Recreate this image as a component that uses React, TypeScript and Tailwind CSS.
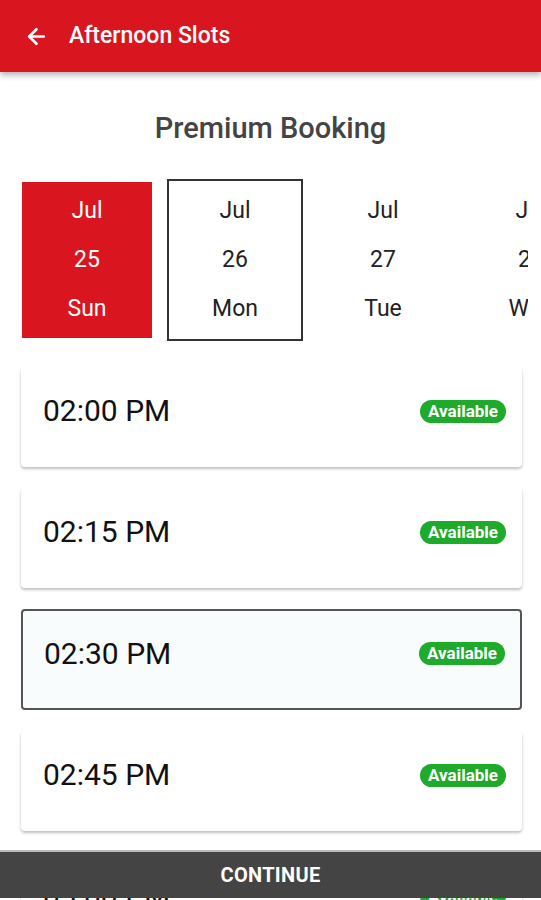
import { ArrowLeft } from "lucide-react";

const dates = [
  { month: "Jul", day: "25", week: "Sun" },
  { month: "Jul", day: "26", week: "Mon" },
  { month: "Jul", day: "27", week: "Tue" },
  { month: "Jul", day: "28", week: "Wed" },
];

const slots = ["02:00 PM", "02:15 PM", "02:30 PM", "02:45 PM", "03:00 PM"];

export default function App() {
  const activeDate = 0;
  const focusDate = 1;
  const selectedSlot = 2;

  return (
    <div
      className="relative h-[900px] overflow-hidden bg-white"
      style={{ fontFamily: "Roboto, 'Noto Sans', sans-serif" }}
    >
      {/* Toolbar */}
      <header className="relative z-10 flex h-[72px] items-center bg-[#d9161f] pl-[24px] text-white shadow-[0_3px_6px_rgba(0,0,0,0.3)]">
        <ArrowLeft size={25} strokeWidth={2.5} />
        <h1 className="ml-[20px] text-[23px] font-medium">Afternoon Slots</h1>
      </header>

      <h2 className="mt-[39px] text-center text-[29px] font-medium leading-[34px] text-[#444]">
        Premium Booking
      </h2>

      {/* Date strip */}
      <div className="mx-[13px] mt-[34px] flex h-[162px] overflow-hidden">
        {dates.map((d, i) => {
          const active = i === activeDate;
          const focus = i === focusDate;
          return (
            <div key={d.day} className="flex w-[148px] shrink-0 items-center justify-center">
              <div
                className={
                  active
                    ? "flex h-[156px] w-[130px] flex-col items-center justify-center gap-[21px] bg-[#d9161f] text-white"
                    : focus
                      ? "flex h-[162px] w-[136px] flex-col items-center justify-center gap-[21px] border-2 border-[#333] text-[#222]"
                      : "flex h-[156px] w-[130px] flex-col items-center justify-center gap-[21px] text-[#222]"
                }
              >
                <span className="text-[23px] leading-[28px]">{d.month}</span>
                <span className="text-[23px] leading-[28px]">{d.day}</span>
                <span className="text-[23px] leading-[28px]">{d.week}</span>
              </div>
            </div>
          );
        })}
      </div>

      {/* Slots */}
      <div className="mt-[26px] flex flex-col gap-[21px] pl-[21px] pr-[19px]">
        {slots.map((s, i) => {
          const sel = i === selectedSlot;
          return (
            <div
              key={s}
              className={
                sel
                  ? "flex h-[101px] items-center justify-between rounded-[4px] border-2 border-[#555] bg-[#f8fcfd] pb-[12px] pl-[21px] pr-[15px]"
                  : "flex h-[100px] items-center justify-between rounded-[4px] bg-white pb-[12px] pl-[22px] pr-[16px] shadow-[0_2px_3px_rgba(0,0,0,0.25)]"
              }
            >
              <span className="text-[30px] leading-[36px] text-[#111]">{s}</span>
              <span className="rounded-full bg-[#1eaa2b] px-[8px] py-[2px] text-[17px] font-bold leading-[19px] text-white">
                Available
              </span>
            </div>
          );
        })}
      </div>

      {/* Continue bar */}
      <button className="absolute bottom-[2px] left-0 right-0 z-20 flex h-[48px] items-center justify-center border-t-2 border-[#bbb] bg-[#444] text-[20px] font-bold tracking-[0.3px] text-white">
        CONTINUE
      </button>
    </div>
  );
}
